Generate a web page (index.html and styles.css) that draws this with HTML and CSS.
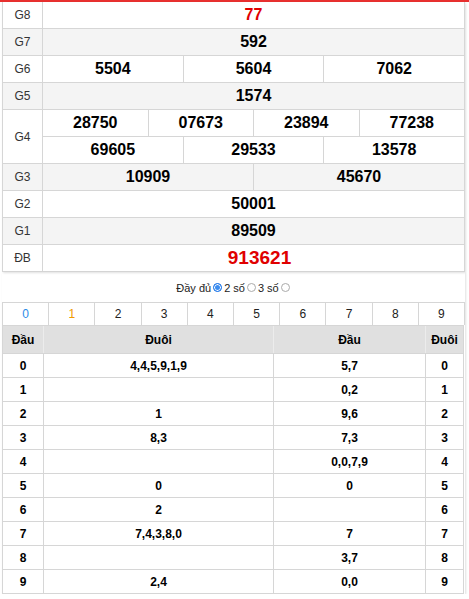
FILE: index.html
```html
<!DOCTYPE html>
<html lang="vi">
<head>
<meta charset="utf-8">
<title>Kết quả xổ số</title>
<link rel="stylesheet" href="styles.css">
</head>
<body>
<div class="topbar"></div>
<div class="wrap">
  <div class="results card">
    <div class="row">
      <div class="label">G8</div>
      <div class="vals"><div class="cell red">77</div></div>
    </div>
    <div class="row alt">
      <div class="label">G7</div>
      <div class="vals"><div class="cell">592</div></div>
    </div>
    <div class="row">
      <div class="label">G6</div>
      <div class="vals"><div class="cell">5504</div><div class="cell">5604</div><div class="cell">7062</div></div>
    </div>
    <div class="row alt">
      <div class="label">G5</div>
      <div class="vals"><div class="cell">1574</div></div>
    </div>
    <div class="row">
      <div class="label">G4</div>
      <div class="stack">
        <div class="vals sub"><div class="cell">28750</div><div class="cell">07673</div><div class="cell">23894</div><div class="cell">77238</div></div>
        <div class="vals"><div class="cell">69605</div><div class="cell">29533</div><div class="cell">13578</div></div>
      </div>
    </div>
    <div class="row alt">
      <div class="label">G3</div>
      <div class="vals"><div class="cell">10909</div><div class="cell">45670</div></div>
    </div>
    <div class="row">
      <div class="label">G2</div>
      <div class="vals"><div class="cell">50001</div></div>
    </div>
    <div class="row alt">
      <div class="label">G1</div>
      <div class="vals"><div class="cell">89509</div></div>
    </div>
    <div class="row last">
      <div class="label">ĐB</div>
      <div class="vals"><div class="cell red big">913621</div></div>
    </div>
  </div>

  <div class="loto card">
    <div class="options">
      <span>Đầy đủ</span><span class="radio on"></span>
      <span>2 số</span><span class="radio"></span>
      <span>3 số</span><span class="radio"></span>
    </div>
    <div class="digits">
      <div class="digit blue">0</div>
      <div class="digit orange">1</div>
      <div class="digit">2</div>
      <div class="digit">3</div>
      <div class="digit">4</div>
      <div class="digit">5</div>
      <div class="digit">6</div>
      <div class="digit">7</div>
      <div class="digit">8</div>
      <div class="digit">9</div>
    </div>
    <div class="lt">
      <div class="lrow head"><div class="c1">Đầu</div><div class="c2">Đuôi</div><div class="c3">Đầu</div><div class="c4">Đuôi</div></div>
      <div class="lrow"><div class="c1">0</div><div class="c2">4,4,5,9,1,9</div><div class="c3">5,7</div><div class="c4">0</div></div>
      <div class="lrow"><div class="c1">1</div><div class="c2"></div><div class="c3">0,2</div><div class="c4">1</div></div>
      <div class="lrow"><div class="c1">2</div><div class="c2">1</div><div class="c3">9,6</div><div class="c4">2</div></div>
      <div class="lrow"><div class="c1">3</div><div class="c2">8,3</div><div class="c3">7,3</div><div class="c4">3</div></div>
      <div class="lrow"><div class="c1">4</div><div class="c2"></div><div class="c3">0,0,7,9</div><div class="c4">4</div></div>
      <div class="lrow"><div class="c1">5</div><div class="c2">0</div><div class="c3">0</div><div class="c4">5</div></div>
      <div class="lrow"><div class="c1">6</div><div class="c2">2</div><div class="c3"></div><div class="c4">6</div></div>
      <div class="lrow"><div class="c1">7</div><div class="c2">7,4,3,8,0</div><div class="c3">7</div><div class="c4">7</div></div>
      <div class="lrow"><div class="c1">8</div><div class="c2"></div><div class="c3">3,7</div><div class="c4">8</div></div>
      <div class="lrow"><div class="c1">9</div><div class="c2">2,4</div><div class="c3">0,0</div><div class="c4">9</div></div>
    </div>
  </div>
</div>
</body>
</html>
```

FILE: styles.css
```css
* { box-sizing: border-box; }
html, body { margin: 0; padding: 0; background: #fff; }
body { font-family: "Liberation Sans", Arial, sans-serif; color: #000; }

.topbar { height: 2px; background: #e8302f; }
.wrap { padding: 0 4px 0 2px; }

.card { box-shadow: 1px 1px 2px rgba(0,0,0,0.12); }

.results { border: 1px solid #d6d6d6; border-top: 0; }
.row { display: flex; border-bottom: 1px solid #d6d6d6; background: #fff; }
.row.last { border-bottom: 0; }
.row.alt { background: #f4f4f4; }
.label {
  width: 40px; flex: none; border-right: 1px solid #d6d6d6;
  display: flex; align-items: center; justify-content: center;
  font-size: 12px; color: #333;
}
.stack { flex: 1; display: flex; flex-direction: column; }
.vals { flex: 1; display: flex; height: 26px; }
.stack .vals { flex: none; }
.vals.sub { border-bottom: 1px solid #d6d6d6; height: 27px; }
.cell {
  flex: 1; display: flex; align-items: center; justify-content: center;
  font-size: 16px; font-weight: bold; color: #000;
}
.cell + .cell { border-left: 1px solid #d6d6d6; }
.cell.red { color: #e00000; }
.cell.big { font-size: 19px; padding-left: 12px; }

.options {
  height: 30px; display: flex; align-items: center; justify-content: center;
  font-size: 11px; color: #222; gap: 1px; padding-top: 1px;
}
.radio {
  width: 9px; height: 9px; border-radius: 50%; border: 1px solid #aaa;
  background: #fff; display: inline-block; margin: 0 1px;
}
.radio.on { border-color: #1a73e8; background: #3d8ef0; box-shadow: inset 0 0 0 1px #fff; }

.digits { display: flex; border: 1px solid #d6d6d6; border-bottom: 0; height: 23px; }
.digit {
  flex: 1; display: flex; align-items: center; justify-content: center;
  font-size: 12px; color: #222;
}
.digit + .digit { border-left: 1px solid #d6d6d6; }
.digit.blue { color: #2a8be8; }
.digit.orange { color: #f09a00; }

.lt { border: 1px solid #d6d6d6; margin-right: 1px; }
.lrow { display: flex; height: 24px; border-top: 1px solid #d6d6d6; font-size: 12px; font-weight: bold; }
.lrow.head { height: 27px; background: #e0e0e0; border-top: 0; }
.lrow > div { display: flex; align-items: center; justify-content: center; }
.lrow > div + div { border-left: 1px solid #d6d6d6; }
.lrow.head > div + div { border-left-color: #ececec; }
.c1 { width: 40px; flex: none; }
.c2 { width: 230px; flex: none; }
.c3 { width: 152px; flex: none; }
.c4 { flex: 1; }
```
